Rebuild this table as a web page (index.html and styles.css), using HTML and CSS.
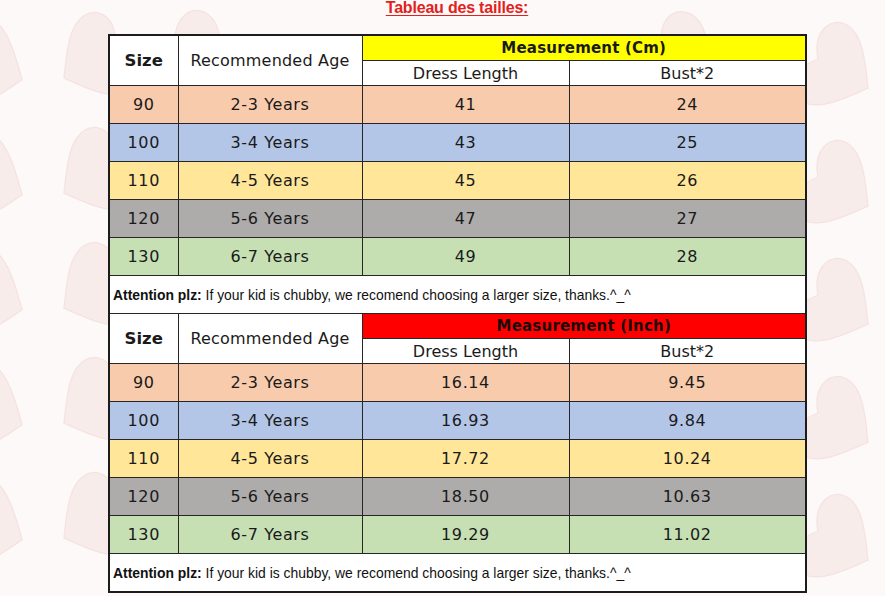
FILE: index.html
```html
<!DOCTYPE html>
<html lang="fr">
<head>
<meta charset="utf-8">
<title>Tableau des tailles</title>
<link rel="stylesheet" href="styles.css">
</head>
<body>
<div class="backdrop">
  <svg width="885" height="596" viewBox="0 0 885 596" xmlns="http://www.w3.org/2000/svg">
    <defs>
      <path id="heart" d="M0,38 C-22,22 -52,2 -52,-20 C-52,-42 -26,-52 0,-30 C26,-52 52,-42 52,-20 C52,2 22,22 0,38Z"/>
    </defs>
    <g fill="#f8eceb" stroke="#f5e3e0" stroke-width="1.5">
      <use href="#heart" transform="translate(-10,68) rotate(-70) scale(0.9)"/>
      <use href="#heart" transform="translate(-10,183) rotate(-70) scale(0.9)"/>
      <use href="#heart" transform="translate(-10,298) rotate(-70) scale(0.9)"/>
      <use href="#heart" transform="translate(-10,413) rotate(-70) scale(0.9)"/>
      <use href="#heart" transform="translate(-10,528) rotate(-70) scale(0.9)"/>
      <use href="#heart" transform="translate(92,62) rotate(60) scale(0.85)"/>
      <use href="#heart" transform="translate(92,177) rotate(60) scale(0.85)"/>
      <use href="#heart" transform="translate(92,292) rotate(60) scale(0.85)"/>
      <use href="#heart" transform="translate(92,407) rotate(60) scale(0.85)"/>
      <use href="#heart" transform="translate(92,522) rotate(60) scale(0.85)"/>
      <use href="#heart" transform="translate(840,72) rotate(-60) scale(0.85)"/>
      <use href="#heart" transform="translate(840,190) rotate(-60) scale(0.85)"/>
      <use href="#heart" transform="translate(840,308) rotate(-60) scale(0.85)"/>
      <use href="#heart" transform="translate(840,426) rotate(-60) scale(0.85)"/>
      <use href="#heart" transform="translate(840,544) rotate(-60) scale(0.85)"/>
      <use href="#heart" transform="translate(200,60) rotate(50) scale(0.85)"/>
      <use href="#heart" transform="translate(690,60) rotate(40) scale(0.85)"/>
    </g>
  </svg>
</div>
<div class="page">
  <h1 class="title">Tableau des tailles:</h1>
  <table class="chart">
    <colgroup>
      <col class="c-size"><col class="c-age"><col class="c-len"><col class="c-bust">
    </colgroup>
    <tbody>
      <tr class="head-top">
        <th rowspan="2" class="size-h">Size</th>
        <th rowspan="2" class="age-h">Recommended Age</th>
        <th colspan="2" class="meas meas-cm">Measurement (Cm)</th>
      </tr>
      <tr class="head-sub"><td>Dress Length</td><td>Bust*2</td></tr>
      <tr class="row peach"><td>90</td><td>2-3 Years</td><td>41</td><td>24</td></tr>
      <tr class="row blue"><td>100</td><td>3-4 Years</td><td>43</td><td>25</td></tr>
      <tr class="row yellow"><td>110</td><td>4-5 Years</td><td>45</td><td>26</td></tr>
      <tr class="row gray"><td>120</td><td>5-6 Years</td><td>47</td><td>27</td></tr>
      <tr class="row green"><td>130</td><td>6-7 Years</td><td>49</td><td>28</td></tr>
      <tr class="note"><td colspan="4"><b>Attention plz:</b> If your kid is chubby, we recomend choosing a larger size, thanks.^_^</td></tr>
      <tr class="head-top">
        <th rowspan="2" class="size-h">Size</th>
        <th rowspan="2" class="age-h">Recommended Age</th>
        <th colspan="2" class="meas meas-inch">Measurement (Inch)</th>
      </tr>
      <tr class="head-sub"><td>Dress Length</td><td>Bust*2</td></tr>
      <tr class="row peach"><td>90</td><td>2-3 Years</td><td>16.14</td><td>9.45</td></tr>
      <tr class="row blue"><td>100</td><td>3-4 Years</td><td>16.93</td><td>9.84</td></tr>
      <tr class="row yellow"><td>110</td><td>4-5 Years</td><td>17.72</td><td>10.24</td></tr>
      <tr class="row gray"><td>120</td><td>5-6 Years</td><td>18.50</td><td>10.63</td></tr>
      <tr class="row green"><td>130</td><td>6-7 Years</td><td>19.29</td><td>11.02</td></tr>
      <tr class="note"><td colspan="4"><b>Attention plz:</b> If your kid is chubby, we recomend choosing a larger size, thanks.^_^</td></tr>
    </tbody>
  </table>
</div>
</body>
</html>
```

FILE: styles.css
```css
html, body {
  margin: 0;
  padding: 0;
}

body {
  background: #fcf9f8;
  color: #1a1a1a;
  font-family: "DejaVu Sans", "Noto Sans", sans-serif;
  width: 885px;
  height: 596px;
  overflow: hidden;
  position: relative;
}

.backdrop {
  position: absolute;
  left: 0;
  top: 0;
  width: 885px;
  height: 596px;
  z-index: 0;
}

.backdrop svg {
  display: block;
}

.page {
  position: relative;
  z-index: 1;
  width: 698px;
  margin-left: 108px;
}

.title {
  margin: 0;
  height: 34px;
  text-align: center;
  font-family: "Liberation Sans", Arial, sans-serif;
  font-weight: bold;
  font-size: 16px;
  line-height: 15px;
  color: #e2211c;
  text-decoration: underline;
  text-decoration-thickness: 1px;
  text-underline-offset: 2px;
  letter-spacing: -0.2px;
}

.chart {
  border-collapse: collapse;
  table-layout: fixed;
  width: 699px;
  border: 2px solid #1c1c1c;
}

.c-size { width: 69px; }
.c-age { width: 184px; }
.c-len { width: 207px; }
.c-bust { width: 237px; }

.chart th,
.chart td {
  border: 1px solid #262626;
  padding: 0;
  text-align: center;
  vertical-align: middle;
  font-size: 16px;
  font-weight: normal;
  line-height: 18px;
  background: #ffffff;
}

.head-top th,
.head-sub td {
  height: 24px;
}

.head-sub td {
  padding-top: 2px;
  height: 22px;
}

.chart .size-h {
  font-weight: bold;
  font-size: 16.5px;
}

.chart .age-h {
  letter-spacing: 0.2px;
}

.chart .meas {
  font-weight: bold;
  font-size: 15px;
  letter-spacing: 0.2px;
}

.chart .meas-cm { background: #ffff00; }
.chart .meas-inch { background: #ff0000; color: #1a0a0a; }

.row td {
  height: 37px;
  letter-spacing: 0.6px;
}

.chart .peach td { background: #f8cbad; }
.chart .blue td { background: #b4c6e7; }
.chart .yellow td { background: #ffe699; }
.chart .gray td { background: #aeabab; }
.chart .green td { background: #c6e0b4; }

.chart .note td {
  height: 37px;
  text-align: left;
  padding-left: 3px;
  font-family: "Liberation Sans", Arial, sans-serif;
  font-size: 13.9px;
  letter-spacing: 0;
  color: #111;
  background: #ffffff;
}

.note b {
  font-weight: bold;
}
```
